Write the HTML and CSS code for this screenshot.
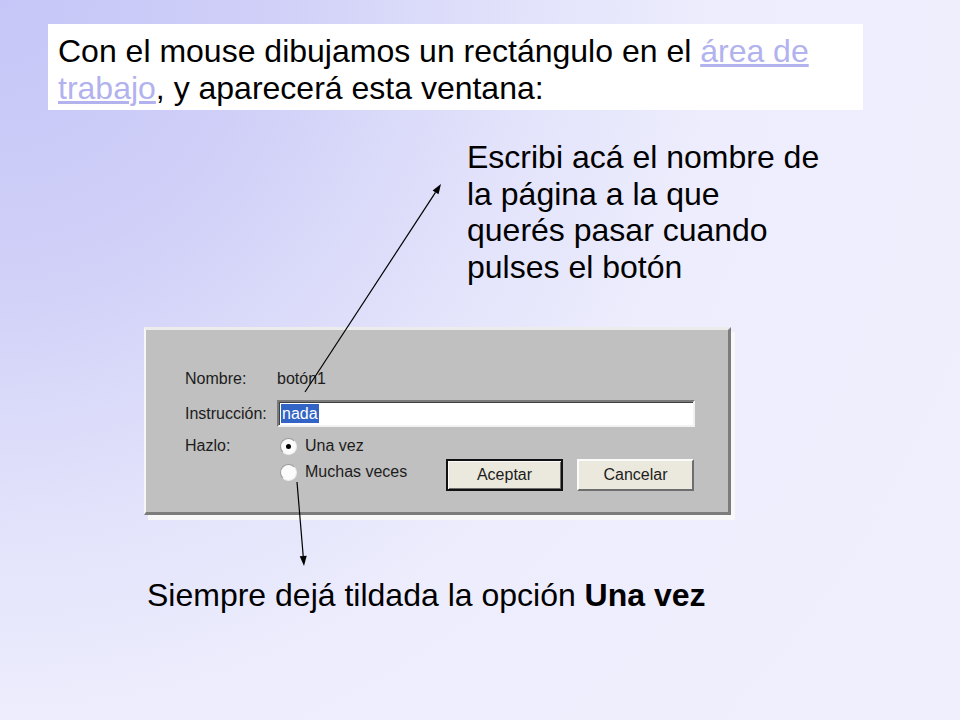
FILE: index.html
```html
<!DOCTYPE html>
<html lang="es">
<head>
<meta charset="utf-8">
<title>Ventana de botón</title>
<link rel="stylesheet" href="styles.css">
</head>
<body>
<div class="slide">
  <div class="intro">
    <span class="big intro-text">Con el mouse dibujamos un rectángulo en el <a class="link" href="#">área de</a><br><a class="link" href="#">trabajo</a>, y aparecerá esta ventana:</span>
  </div>

  <div class="note">
    <span class="big note-text">Escribi acá el nombre de<br>la página a la que<br>querés pasar cuando<br>pulses el botón</span>
  </div>

  <div class="dialog">
    <div class="form">
      <div class="label">Nombre:</div>
      <div class="value">botón1</div>

      <div class="label row2">Instrucción:</div>
      <div class="input row2"><span class="selected">nada</span></div>

      <div class="label row3">Hazlo:</div>
      <div class="options row3">
        <div class="radios">
          <div class="radio-item"><span class="radio checked"></span><span>Una vez</span></div>
          <div class="radio-item"><span class="radio"></span><span>Muchas veces</span></div>
        </div>
        <div class="buttons">
          <div class="btn default">Aceptar</div>
          <div class="btn">Cancelar</div>
        </div>
      </div>
    </div>
  </div>

  <p class="caption"><span class="big caption-text">Siempre dejá tildada la opción <b>Una vez</b></span></p>

  <svg class="arrows" width="960" height="720" viewBox="0 0 960 720">
    <line x1="305" y1="392" x2="435.5" y2="192.4" stroke="#000" stroke-width="1.2"/>
    <polygon points="441,184 438.5,194.3 432.6,190.5" fill="#000"/>
    <line x1="297" y1="482" x2="303.2" y2="556" stroke="#000" stroke-width="1.2"/>
    <polygon points="304,566 306.7,555.7 299.7,556.3" fill="#000"/>
  </svg>
</div>
</body>
</html>
```

FILE: styles.css
```css
html, body {
  margin: 0;
  padding: 0;
}

.slide {
  position: relative;
  width: 960px;
  height: 720px;
  overflow: hidden;
  display: flex;
  flex-direction: column;
  align-items: flex-start;
  font-family: "Liberation Sans", Arial, sans-serif;
  color: #000;
  background: radial-gradient(circle at 0 0, #c6c6f8 0px, #cfcff8 260px, #e2e2fb 520px, #ededfd 720px, #efeffd 1200px);
}

.big {
  display: inline-block;
  white-space: nowrap;
  font-size: 32px;
}

.intro {
  margin: 24px 0 0 48px;
  width: 815px;
  height: 86px;
  box-sizing: border-box;
  padding: 9px 10px 0;
  background: #ffffff;
}

.intro-text {
  line-height: 36.5px;
}

.link {
  color: #b2b2ee;
  text-decoration: underline;
}

.note {
  margin: 29px 0 0 467px;
}

.note-text {
  line-height: 36.5px;
}

.dialog {
  margin: 42px 0 0 144px;
  width: 587px;
  height: 188px;
  box-sizing: border-box;
  background: #c0c0c0;
  border-top: 3px solid #ececec;
  border-left: 2px solid #f6f6f6;
  border-right: 3px solid #7c7c7c;
  border-bottom: 3px solid #7c7c7c;
  box-shadow: 4px 5px 0 #f8f8f8;
  padding: 39px 0 0 39px;
  font-size: 16px;
  color: #1c1c1c;
}

.form {
  display: grid;
  grid-template-columns: 92px 418px;
  align-items: center;
}

.row2 {
  margin-top: 11px;
}

.row3 {
  margin-top: 9px;
  align-self: start;
}

.label,
.value {
  line-height: 20px;
}

.input {
  height: 27px;
  box-sizing: border-box;
  background: #ffffff;
  border: 2px solid;
  border-color: #7a7a7a #f2f2f2 #f2f2f2 #7a7a7a;
  box-shadow: inset 1px 1px 0 #404040;
  padding: 2px 0 0 2px;
  line-height: 19px;
}

.selected {
  display: inline-block;
  background: #3164c4;
  color: #ffffff;
  padding: 0 1px;
  line-height: 19px;
}

.options {
  display: flex;
}

.radios {
  width: 169px;
  display: flex;
  flex-direction: column;
  gap: 6px;
}

.radio-item {
  display: flex;
  align-items: center;
  gap: 8px;
  height: 20px;
  line-height: 20px;
  padding-left: 3px;
}

.radio {
  position: relative;
  width: 17px;
  height: 17px;
  box-sizing: border-box;
  border-radius: 50%;
  background: #fbfbfb;
  border: 1px solid;
  border-color: #9a9a9a #ececec #ececec #9a9a9a;
}

.radio.checked::after {
  content: "";
  position: absolute;
  left: 5px;
  top: 5px;
  width: 5px;
  height: 5px;
  border-radius: 50%;
  background: #000;
}

.buttons {
  margin-top: 23px;
  display: flex;
  gap: 14px;
}

.btn {
  width: 117px;
  height: 32px;
  box-sizing: border-box;
  background: #ebe9dd;
  border: 2px solid;
  border-color: #fbfbfb #6e6e6e #6e6e6e #fbfbfb;
  display: flex;
  align-items: center;
  justify-content: center;
  color: #1c1c1c;
}

.btn.default {
  border: 2px solid #111;
  box-shadow: inset 1px 1px 0 #fbfbfb, inset -1px -1px 0 #6e6e6e;
}

.caption {
  margin: 62px 0 0 147px;
}

.caption-text {
  line-height: 36px;
}

.arrows {
  position: absolute;
  left: 0;
  top: 0;
  pointer-events: none;
}
```
